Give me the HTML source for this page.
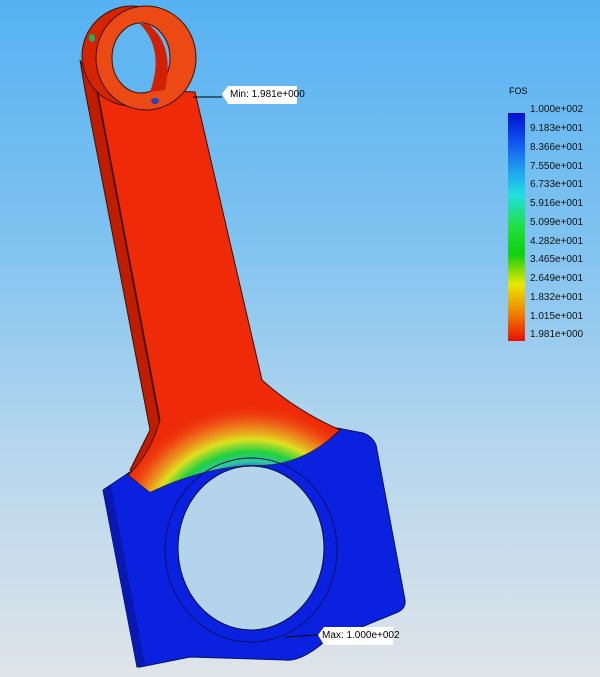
<!DOCTYPE html>
<html><head><meta charset="utf-8"><style>
html,body{margin:0;padding:0;width:600px;height:677px;overflow:hidden}
body{background:linear-gradient(#56b2f2 0%,#7fc2f0 35%,#b4d6ee 65%,#dfe4e8 100%);font-family:"Liberation Sans",sans-serif}
svg{position:absolute;left:0;top:0}
.lab{position:absolute;font-size:10px;color:#111;left:530px;line-height:12px}
</style></head><body>
<svg width="600" height="677" viewBox="0 0 600 677">
<defs>
<radialGradient id="hg" gradientUnits="userSpaceOnUse" cx="251" cy="548" r="160">
<stop offset="0.5" stop-color="#1060f0"/>
<stop offset="0.54" stop-color="#30c8a0"/>
<stop offset="0.6" stop-color="#20d040"/>
<stop offset="0.68" stop-color="#e0e020"/>
<stop offset="0.78" stop-color="#f08020" stop-opacity="0.75"/>
<stop offset="0.9" stop-color="#ee3010" stop-opacity="0"/>
</radialGradient>
<linearGradient id="lg" x1="0" y1="0" x2="0" y2="1">
<stop offset="0" stop-color="#0010d0"/>
<stop offset="0.12" stop-color="#1050f0"/>
<stop offset="0.25" stop-color="#20a0f0"/>
<stop offset="0.36" stop-color="#20e0e0"/>
<stop offset="0.5" stop-color="#20e040"/>
<stop offset="0.62" stop-color="#10d010"/>
<stop offset="0.75" stop-color="#e8e800"/>
<stop offset="0.88" stop-color="#f08000"/>
<stop offset="1" stop-color="#e81000"/>
</linearGradient>
</defs>
<path d="M103,490 L133,470 L240,462 L337,428 L363,433 Q372,436 376,445 L405,600 Q406,608 398,612 L323,643 Q300,662 285,660 L190,657 L140,667 L137,667 Z" fill="#0a22e0" stroke="#001060" stroke-width="1"/>
<path d="M103,490 L111,486 L145,665 L137,667 Z" fill="#0818b0"/>
<path d="M80,60 L85,90 L150,430 L130,470 L138,472 L160,425 L97,92 Z" fill="#c01c00" stroke="#401000" stroke-width="1"/>
<path d="M97,88 L160,420 Q150,455 128,475 L150,492 Q200,468 250,465 Q300,468 340,430 Q295,410 262,380 L195,92 Z" fill="#ee2a08" stroke="#401000" stroke-width="1"/>
<path d="M97,88 L160,420 Q150,455 128,475 L150,492 Q200,468 250,465 Q300,468 340,430 Q295,410 262,380 L195,92 Z" fill="url(#hg)"/>
<ellipse cx="251" cy="550" rx="86" ry="92" fill="none" stroke="#001060" stroke-width="1"/>
<ellipse cx="251" cy="548" rx="73" ry="82" fill="#b4d4ec" stroke="#001040" stroke-width="1"/>
<ellipse cx="132" cy="56" rx="50" ry="50" fill="#d42400" stroke="#401000" stroke-width="1"/>
<ellipse cx="146" cy="58" rx="50" ry="52" fill="#ec4a14" stroke="#401000" stroke-width="1"/>
<ellipse cx="141" cy="58" rx="29" ry="35" fill="#60b6f0" stroke="#401000" stroke-width="1"/>
<path d="M148,24 Q175,45 165,90 L150,92 Q165,50 140,24 Z" fill="#d02000"/>
<ellipse cx="155" cy="101" rx="4" ry="3" fill="#2040d0"/>
<ellipse cx="92" cy="38" rx="3" ry="4" fill="#20b060"/>
<rect x="508" y="113" width="17" height="228" fill="url(#lg)"/>
<line x1="193" y1="97" x2="222" y2="97" stroke="#000" stroke-width="1"/>
<path d="M222,94 L228,86 L297,86 L297,104 L228,104 Z" fill="#fff"/>
<line x1="285" y1="637" x2="318" y2="635" stroke="#000" stroke-width="1"/>
<path d="M318,635 L324,627 L393,627 L393,645 L324,645 Z" fill="#fff"/>
</svg>
<div style="position:absolute;left:230px;top:89px;font-size:10px">Min: 1.981e+000</div>
<div style="position:absolute;left:322px;top:630px;font-size:10px">Max: 1.000e+002</div>
<div style="position:absolute;left:509px;top:86px;font-size:9px">FOS</div>
<div class="lab" style="top:104px">1.000e+002</div>
<div class="lab" style="top:123px">9.183e+001</div>
<div class="lab" style="top:142px">8.366e+001</div>
<div class="lab" style="top:161px">7.550e+001</div>
<div class="lab" style="top:179px">6.733e+001</div>
<div class="lab" style="top:198px">5.916e+001</div>
<div class="lab" style="top:217px">5.099e+001</div>
<div class="lab" style="top:236px">4.282e+001</div>
<div class="lab" style="top:254px">3.465e+001</div>
<div class="lab" style="top:273px">2.649e+001</div>
<div class="lab" style="top:292px">1.832e+001</div>
<div class="lab" style="top:311px">1.015e+001</div>
<div class="lab" style="top:329px">1.981e+000</div>
</body></html>
